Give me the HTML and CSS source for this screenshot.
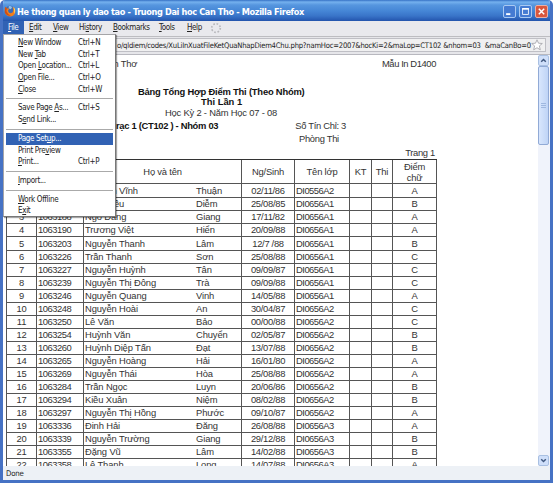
FILE: index.html
```html
<!DOCTYPE html>
<html lang="vi">
<head>
<meta charset="utf-8">
<title>He thong quan ly dao tao</title>
<link rel="stylesheet" href="styles.css">
</head>
<body>
<div class="window">
  <header class="titlebar">
    <svg class="logo" viewBox="0 0 14 14"><circle cx="7" cy="6.6" r="5.6" fill="#3a6bb8"/><path d="M5.500 1.500Q8 .8 9.500 2.500L8 5L5.500 4Z" fill="#8fc0ea"/><path d="M1.500 2L3.500 4L6.500 4.200L4.800 6Q4.500 9.500 8 9.500Q11.200 9 10.800 5.500L10 2L12 3.500Q15 9 10.500 12.500Q6 14.500 2.500 11.500Q-.5 7.500 1.500 2Z" fill="#f07f1c"/><path d="M1.500 2L3.500 4L2.800 7Q4 11 8 12.500Q2.500 13 .9 8.500Z" fill="#cf4d17"/><path d="M11 2Q14.500 6 12 10.500Q12.300 6 11 2Z" fill="#ffe06d"/></svg>
    <h1>He thong quan ly dao tao - Truong Dai hoc Can Tho - Mozilla Firefox</h1>
    <div class="controls">
      <svg class="ctl" viewBox="0 0 13 13"><rect x="2.5" y="8.5" width="5" height="2.2" fill="#fff"/></svg>
      <svg class="ctl" viewBox="0 0 13 13"><path d="M3 3.5H10V10H3Z" fill="none" stroke="#fff"/><path d="M2.5 3.2H10.5" stroke="#fff" stroke-width="1.8"/></svg>
      <svg class="ctl close" viewBox="0 0 13 13"><path d="M3.3 3.3L9.7 9.7M9.7 3.3L3.3 9.7" stroke="#fff" stroke-width="1.7"/></svg>
    </div>
  </header>
  <nav class="menubar">
    <span class="m-file"><u>F</u>ile</span><span class="m-edit"><u>E</u>dit</span><span class="m-view"><u>V</u>iew</span><span class="m-history">Hi<u>s</u>tory</span><span class="m-bookmarks"><u>B</u>ookmarks</span><span class="m-tools"><u>T</u>ools</span><span class="m-help"><u>H</u>elp</span>
    <svg class="throbber" viewBox="0 0 12 12"><circle cx="6" cy="6" r="4.3" fill="none" stroke="#b9b9bd" stroke-width="1.7" stroke-dasharray="1.7 1.677"/></svg>
  </nav>
  <div class="toolbar">
    <div class="address"><span class="url">o/qldiem/codes/XuLiInXuatFileKetQuaNhapDiem4Chu.php?namHoc=2007&amp;hocKi=2&amp;maLop=CT102 &amp;nhom=03&nbsp; &amp;maCanBo=0</span>
      <svg class="star" viewBox="0 0 12 12"><path d="M6 .8L7.5 4.2L11.3 4.5L8.4 6.9L9.3 10.8L6 8.7L2.7 10.8L3.6 6.9L.7 4.5L4.5 4.2Z" fill="#fff" stroke="#a0a0a6" stroke-width=".8"/></svg>
    </div>
  </div>
  <div class="viewport">
    <main class="page">
      <div class="line school"><span>Cần Thơ</span><span class="form-no">Mẫu In D1400</span></div>
      <div class="line heading"><b>Bảng Tổng Hợp Điểm Thi (Theo Nhóm)</b></div>
      <div class="line attempt"><b>Thi Lần 1</b></div>
      <div class="line term">Học Kỳ 2 - Năm Học 07 - 08</div>
      <div class="line course"><b>rạc 1 (CT102 ) - Nhóm 03</b><span class="credits">Số Tín Chỉ: 3</span></div>
      <div class="line room">Phòng Thi</div>
      <div class="line page-no">Trang 1</div>
      <div class="grid" id="grid">
        <div class="row head"><span></span><span></span><span>Họ và tên</span><span>Ng/Sinh</span><span>Tên lớp</span><span>KT</span><span>Thi</span><span>Điểm<br>chữ</span></div>
      </div>
    </main>
    <aside class="scrollbar">
      <svg class="arrow" viewBox="0 0 11 11"><path d="M2.7 7L5.5 4.2L8.3 7" fill="none" stroke="#40587f" stroke-width="1.8"/></svg>
      <div class="thumb"><i></i></div>
      <svg class="arrow down" viewBox="0 0 11 11"><path d="M2.7 4L5.5 6.8L8.3 4" fill="none" stroke="#40587f" stroke-width="1.8"/></svg>
    </aside>
  </div>
  <footer class="status">Done</footer>
  <div class="menu">
    <div class="item"><span><u>N</u>ew Window</span><span>Ctrl+N</span></div>
    <div class="item"><span>New <u>T</u>ab</span><span>Ctrl+T</span></div>
    <div class="item"><span>Open <u>L</u>ocation...</span><span>Ctrl+L</span></div>
    <div class="item"><span><u>O</u>pen File...</span><span>Ctrl+O</span></div>
    <div class="item"><span><u>C</u>lose</span><span>Ctrl+W</span></div>
    <hr>
    <div class="item"><span>Save Page <u>A</u>s...</span><span>Ctrl+S</span></div>
    <div class="item"><span>S<u>e</u>nd Link...</span></div>
    <hr>
    <div class="item active"><span>Page Set<u>u</u>p...</span></div>
    <div class="item"><span>Print Pre<u>v</u>iew</span></div>
    <div class="item"><span><u>P</u>rint...</span><span>Ctrl+P</span></div>
    <hr>
    <div class="item"><span><u>I</u>mport...</span></div>
    <hr>
    <div class="item"><span><u>W</u>ork Offline</span></div>
    <div class="item"><span>E<u>x</u>it</span></div>
  </div>
</div>
<script src="script.js"></script>
</body>
</html>
```
FILE: styles.css
```css
* { box-sizing: border-box; }
body { margin: 0; background: #fff; font-family: "Liberation Sans", sans-serif; }
.window {
  position: relative; width: 553px; height: 483px; overflow: hidden;
  display: flex; flex-direction: column;
  border: 3px solid #4672c4; border-top: 0; border-radius: 5px 5px 0 0;
  background: #e9e9ed;
}
.titlebar {
  flex: 0 0 21px; margin: 0 -3px; padding: 2px 5px 0 4px;
  display: flex; align-items: center;
  background: linear-gradient(#3672c5 0, #75b1ee 2px, #5696df 5px, #4586d6 11px, #3974c8 16px, #2354ad 21px);
}
.logo { width: 12px; height: 12px; flex: none; margin-bottom: 2px; }
h1 {
  flex: 1; margin: 1px 0 0 1px; color: #fff; white-space: nowrap;
  font: bold 9.1px/18px "DejaVu Sans Condensed", "DejaVu Sans", sans-serif;
  font-stretch: condensed; letter-spacing: -.37px;
}
.controls { display: flex; gap: 3px; }
.ctl { width: 13px; height: 13px; border: 1px solid #a9c9f2; border-radius: 2px; background: #457bd2; }
.ctl.close { background: #d9573d; border-color: #eab0a5; }
u { text-underline-offset: 1px; text-decoration-thickness: 1px; }
.menubar, .address, .menu, .status { font-family: "DejaVu Sans Condensed", "DejaVu Sans", sans-serif; font-stretch: condensed; color: #222; white-space: nowrap; }
.menubar { flex: 0 0 15px; display: flex; font-size: 8px; line-height: 14px; background: #e9e9ed; letter-spacing: -.4px; }
.menubar span { flex: none; }
.m-file { width: 21px; padding-left: 5px; background: #3162b4; }
.menubar .m-file { color: #fff; }
.m-edit { width: 29px; padding-left: 5px; }
.m-view { width: 26px; }
.m-history { width: 34px; }
.m-bookmarks { width: 46px; }
.m-tools { width: 28px; }
.m-help { width: 23px; }
.throbber { width: 12px; height: 12px; margin-top: 1px; }
.toolbar { flex: 0 0 18px; padding: 1px 4px 2px 0; background: #e6e6ea; border-top: 1px solid #bdbdc1; border-bottom: 1px solid #b8b8bf; }
.address { height: 14px; display: flex; align-items: center; justify-content: space-between; padding: 0 3px 0 113px; border: 1px solid #bfbfc5; background: #f0f0f1; font-size: 7.6px; }
.url { letter-spacing: -.21px; }
.star { width: 12px; height: 12px; flex: none; }
.viewport { flex: 0 0 411px; display: flex; background: #fff; overflow: hidden; }
.page { flex: 1; padding-left: 3px; font-size: 9.4px; letter-spacing: -.2px; color: #333; overflow: hidden; }
.line { display: flex; white-space: nowrap; height: 12px; line-height: 12px; }
.line b { color: #111; }
.school { margin-top: 3px; padding-left: 96px; }
.form-no { margin-left: auto; margin-right: 102px; letter-spacing: -.4px; }
.heading { margin-top: 16px; padding-left: 132px; }
.attempt { margin-top: -2px; padding-left: 195px; letter-spacing: 0; }
.term { margin-top: -1px; padding-left: 159px; }
.course { padding-left: 110px; margin-top: 1px; letter-spacing: -.3px; }
.credits { margin-left: auto; margin-right: 192px; }
.room { margin-top: 1px; padding-left: 293px; letter-spacing: -.3px; }
.page-no { margin-top: 2px; justify-content: flex-end; padding-right: 103px; letter-spacing: -.3px; }
.grid { width: 431px; border-top: 1px solid #333; border-left: 1px solid #555; }
.row { display: grid; grid-template-columns: 30px 47px 158px 53px 55px 22px 21px 44px; height: 13.04px; line-height: 13px; }
.row > span { border-right: 1px solid #555; border-bottom: 1px solid #555; text-align: center; white-space: nowrap; min-width: 0; }
.row.head { height: 24.4px; line-height: 23px; }
.row.head > span:last-child { line-height: 11px; padding-top: 1px; }
.body > span:nth-child(2), .body > span:nth-child(5) { text-align: left; padding-left: 1px; }
.body > span:nth-child(2) { letter-spacing: -.45px; }
.body > span:nth-child(4) { letter-spacing: -.3px; }
.body > span:nth-child(5) { letter-spacing: -.5px; }
.body > .name { display: grid; grid-template-columns: 111px 1fr; text-align: left; padding-left: 1px; letter-spacing: -.12px; }
.scrollbar { flex: 0 0 12px; display: flex; flex-direction: column; background: #f0f3fb; padding-right: 1px; }
.arrow { width: 11px; height: 11px; flex: none; border: 1px solid #a9c0e2; border-radius: 2px; background: #cfdffa; }
.thumb { height: 79px; display: grid; place-items: center; border: 1px solid #91aad6; border-radius: 2px; background: linear-gradient(90deg, #d8e6fd, #bfd4f6); }
.thumb i { width: 5px; height: 6px; background: repeating-linear-gradient(#9fb8e0 0 1px, transparent 1px 2px); }
.down { margin-top: auto; }
.status { flex: 1; background: #edf1f6; font-size: 7.8px; line-height: 15px; padding-left: 3px; letter-spacing: -.2px; }
.menu {
  position: absolute; left: 0; top: 34px; width: 113px; height: 183px;
  padding: 2px; background: #fff; border: 1px solid #a5a5a8; border-right-color: #777; border-bottom-color: #777;
  box-shadow: 1px 1px 1px rgb(0 0 0 / 35%); font-size: 8px; letter-spacing: -.33px;
}
.item { height: 11.7px; line-height: 11.4px; display: grid; grid-template-columns: 60px 1fr; padding-left: 12px; }
.item.active { background: #3162b4; color: #fff; }
hr { margin: 3px 0; height: 1px; border: 0; background: #aaa; }
```
FILE: script.js
```js
const rows = `1|1063170|Nguyễn Vĩnh|Thuận|02/11/86|DI0556A2|A
2|1063175|Trần Kiều|Diễm|25/08/85|DI0656A1|B
3|1063188|Ngô Đăng|Giang|17/11/82|DI0656A1|A
4|1063190|Trương Việt|Hiển|20/09/88|DI0656A1|A
5|1063203|Nguyễn Thanh|Lâm|12/7 /88|DI0656A1|B
6|1063226|Trần Thanh|Sơn|25/08/88|DI0656A1|C
7|1063227|Nguyễn Huỳnh|Tân|09/09/87|DI0656A1|C
8|1063239|Nguyễn Thị Đông|Trà|09/09/88|DI0656A1|C
9|1063246|Nguyễn Quang|Vinh|14/05/88|DI0656A1|A
10|1063248|Nguyễn Hoài|An|30/04/87|DI0656A2|C
11|1063250|Lê Văn|Bảo|00/00/88|DI0656A2|C
12|1063254|Huỳnh Văn|Chuyển|02/05/87|DI0656A2|B
13|1063260|Huỳnh Diệp Tấn|Đạt|13/07/88|DI0656A2|B
14|1063265|Nguyễn Hoàng|Hải|16/01/80|DI0656A2|A
15|1063269|Nguyễn Thái|Hòa|25/08/88|DI0656A2|A
16|1063284|Trần Ngọc|Luyn|20/06/86|DI0656A2|B
17|1063294|Kiều Xuân|Niệm|08/02/88|DI0656A2|B
18|1063297|Nguyễn Thị Hồng|Phước|09/10/87|DI0656A2|A
19|1063336|Đinh Hải|Đăng|26/08/88|DI0656A3|A
20|1063339|Nguyễn Trường|Giang|29/12/88|DI0656A3|B
21|1063355|Đặng Vũ|Lâm|14/02/88|DI0656A3|B
22|1063358|Lê Thanh|Long|14/07/88|DI0656A3|A`;

document.getElementById('grid').insertAdjacentHTML('beforeend', rows.split('\n').map(line => {
  const [no, id, family, given, born, group, grade] = line.split('|');
  return `<div class="row body"><span>${no}</span><span>${id}</span><span class="name"><span>${family}</span><span>${given}</span></span><span>${born}</span><span>${group}</span><span></span><span></span><span>${grade}</span></div>`;
}).join(''));
```
